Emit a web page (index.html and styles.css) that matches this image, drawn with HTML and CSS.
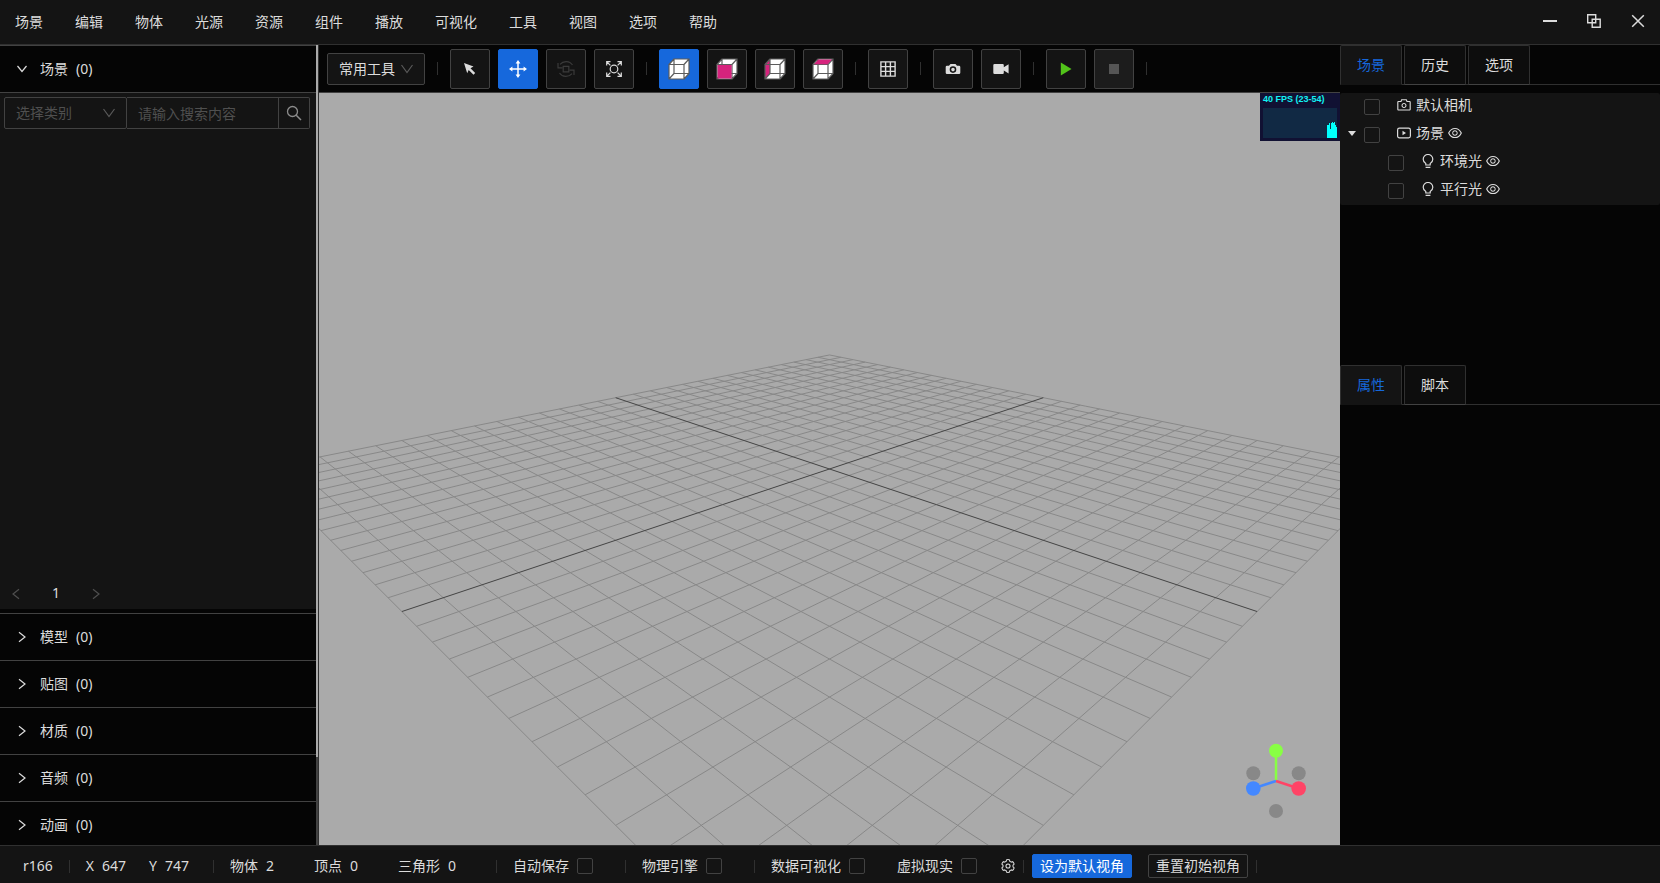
FILE: index.html
```html
<!DOCTYPE html>
<html lang="zh-CN">
<head>
<meta charset="utf-8">
<title>场景编辑器</title>
<link rel="stylesheet" href="styles.css">
</head>
<body>
<svg class="sprite" aria-hidden="true">
  <symbol id="chevron" viewBox="0 0 14 14"><path d="M1.5 3 7 10.5 12.500 3" fill="none" stroke="currentColor" stroke-width="1.2"/></symbol>
  <symbol id="arrow-down" viewBox="0 0 12 12"><path d="M1.500 3 6 8.500 10.500 3" fill="none" stroke="currentColor" stroke-width="1.2"/></symbol>
  <symbol id="arrow-right" viewBox="0 0 12 12"><path d="M3 1.200 9 6 3 10.800" fill="none" stroke="currentColor" stroke-width="1.2"/></symbol>
  <symbol id="arrow-left" viewBox="0 0 12 12"><path d="M9 1.200 3 6 9 10.800" fill="none" stroke="currentColor" stroke-width="1.2"/></symbol>
  <symbol id="eye" viewBox="64 64 896 896"><path fill="currentColor" d="M942.2 486.2C847.4 286.500 704.1 186 512 186c-192.2 0-335.4 100.5-430.2 300.3a60.3 60.3 0 000 51.5C176.600 737.5 319.9 838 512 838c192.2 0 335.4-100.5 430.2-300.3 7.700-16.200 7.700-35 0-51.500zM512 766c-161.3 0-279.4-81.8-362.7-254C232.600 339.8 350.7 258 512 258c161.3 0 279.4 81.8 362.7 254C791.500 684.2 673.4 766 512 766zm-4-430c-97.2 0-176 78.8-176 176s78.8 176 176 176 176-78.8 176-176-78.8-176-176-176zm0 288c-61.9 0-112-50.1-112-112s50.1-112 112-112 112 50.1 112 112-50.1 112-112 112z"/></symbol>
  <symbol id="camera" viewBox="64 64 896 896"><path fill="currentColor" d="M864 248H728l-32.4-90.8a32.07 32.07 0 00-30.2-21.2H358.6c-13.5 0-25.6 8.5-30.1 21.2L296 248H160c-44.2 0-80 35.8-80 80v456c0 44.2 35.8 80 80 80h704c44.2 0 80-35.8 80-80V328c0-44.2-35.8-80-80-80zm8 536c0 4.4-3.6 8-8 8H160c-4.4 0-8-3.6-8-8V328c0-4.4 3.6-8 8-8h186.7l17.1-47.8 22.9-64.2h250.5l22.9 64.2 17.1 47.8H864c4.4 0 8 3.6 8 8v456zM512 384c-88.4 0-160 71.6-160 160s71.6 160 160 160 160-71.6 160-160-71.6-160-160-160zm0 256c-53 0-96-43-96-96s43-96 96-96 96 43 96 96-43 96-96 96z"/></symbol>
  <symbol id="scene" viewBox="0 0 14 14"><rect x=".6" y="2.1" width="12.800" height="9.800" rx="1.800" fill="none" stroke="currentColor" stroke-width="1.2"/><path d="M5.500 4.700v4.600L9 7z" fill="currentColor"/></symbol>
  <symbol id="bulb" viewBox="0 0 14 14"><path d="M4.800 11V9.500C3.100 8.600 2.200 7.200 2.200 5.300a4.800 4.800 0 0 1 9.600 0c0 1.900-.9 3.300-2.600 4.200V11zM4.600 13.300h4.800" fill="none" stroke="currentColor" stroke-width="1.2"/></symbol>
  <symbol id="cube-lines" viewBox="0 0 22 22"><path d="M1 6.500h15V21H1zM6 1h15v14.500H6zM1 6.500 6 1M16 6.500 21 1M16 21l5-5.500M1 21l5-5.500" fill="none" stroke="#5c5c5c" stroke-width="1.200"/></symbol>
</svg>

<header class="menubar">
  <nav class="menu">
    <button>场景</button><button>编辑</button><button>物体</button><button>光源</button><button>资源</button><button>组件</button><button>播放</button><button>可视化</button><button>工具</button><button>视图</button><button>选项</button><button>帮助</button>
  </nav>
  <div class="window-controls">
    <button aria-label="最小化"><svg class="icon" viewBox="0 0 14 14"><path d="M0 7h14" stroke="currentColor" stroke-width="2"/></svg></button>
    <button aria-label="还原"><svg class="icon" viewBox="0 0 14 14"><path d="M.7.7h8v8h-8zM5.200 5.200h8v8h-8z" fill="none" stroke="currentColor" stroke-width="1.400"/></svg></button>
    <button aria-label="关闭"><svg class="icon" viewBox="0 0 14 14"><path d="M1.200 1.200l11.600 11.600M12.800 1.200 1.200 12.800" stroke="currentColor" stroke-width="1.500"/></svg></button>
  </div>
</header>

<main class="workspace">
  <aside class="assets">
    <div class="accordion">
      <section class="group group-open">
        <button class="group-head" aria-expanded="true"><svg class="arrow"><use href="#arrow-down"/></svg><span>场景</span><span>(0)</span></button>
        <div class="group-body">
          <form class="filter">
            <div class="select filter-kind">
              <select aria-label="选择类别"><option>选择类别</option></select>
              <svg class="caret"><use href="#chevron"/></svg>
            </div>
            <input class="filter-text" type="text" placeholder="请输入搜索内容" aria-label="搜索内容">
            <button class="filter-go" type="button" aria-label="搜索"><svg class="search" viewBox="0 0 16 16"><circle cx="6.500" cy="6.500" r="5" fill="none" stroke="currentColor" stroke-width="1.300"/><path d="M10.200 10.200 15 15" stroke="currentColor" stroke-width="1.500"/></svg></button>
          </form>
          <nav class="pager">
            <button aria-label="上一页" disabled><svg class="arrow"><use href="#arrow-left"/></svg></button>
            <button>1</button>
            <button aria-label="下一页" disabled><svg class="arrow"><use href="#arrow-right"/></svg></button>
          </nav>
        </div>
      </section>
      <button class="group-head"><svg class="arrow"><use href="#arrow-right"/></svg><span>模型</span><span>(0)</span></button>
      <button class="group-head"><svg class="arrow"><use href="#arrow-right"/></svg><span>贴图</span><span>(0)</span></button>
      <button class="group-head"><svg class="arrow"><use href="#arrow-right"/></svg><span>材质</span><span>(0)</span></button>
      <button class="group-head"><svg class="arrow"><use href="#arrow-right"/></svg><span>音频</span><span>(0)</span></button>
      <button class="group-head"><svg class="arrow"><use href="#arrow-right"/></svg><span>动画</span><span>(0)</span></button>
    </div>
    <div class="scroll-track"><div class="scroll-thumb"></div></div>
  </aside>

  <section class="stage">
    <div class="toolbar">
      <div class="select tool-kind">
        <select aria-label="工具集"><option>常用工具</option></select>
        <svg class="caret"><use href="#chevron"/></svg>
      </div>
      <i class="rule"></i>
      <button class="tool" aria-label="选择"><svg class="glyph" viewBox="0 0 20 20"><path d="M4 4l9.500 3.600-3 1.700 4.700 4.700-1.700 1.800-4.800-4.800-1.500 3.200z" fill="currentColor"/></svg></button>
      <button class="tool active" aria-label="移动"><svg class="glyph" viewBox="0 0 20 20"><path d="M10 3v14M3 10h14" stroke="currentColor" stroke-width="1.500"/><path d="M10 1l2.400 3.400H7.600zM10 19l2.400-3.400H7.600zM1 10l3.400-2.400v4.800zM19 10l-3.400-2.400v4.800z" fill="currentColor"/></svg></button>
      <button class="tool" aria-label="旋转" disabled><svg class="glyph" viewBox="0 0 20 20"><path d="M7.200 7.400h5.600v5.400H7.200zM4 5.400C7.300 1.500 13.500 1.500 16.500 6M3.500 14c3 4.500 9.200 4.500 12.500.6" fill="none" stroke="currentColor" stroke-width="1.200"/><path d="M2 4v4.800h4.600M18 16v-4.800h-4.600" fill="none" stroke="currentColor" stroke-width="1.200"/></svg></button>
      <button class="tool" aria-label="缩放"><svg class="glyph" viewBox="0 0 20 20"><circle cx="10" cy="10" r="3.800" fill="none" stroke="currentColor" stroke-width="1.200"/><path d="M2.700 6.500V2.700h3.800M13.500 2.700h3.800v3.800M17.300 13.500v3.800h-3.800M6.500 17.300H2.700v-3.800M3 3l3.400 3.400M17 3l-3.400 3.400M17 17l-3.400-3.400M3 17l3.400-3.400" fill="none" stroke="currentColor" stroke-width="1.200"/></svg></button>
      <i class="rule"></i>
      <button class="tool active" aria-label="透视图"><svg class="cube" viewBox="0 0 22 22"><path d="M1 6.500 6 1h15v14.500L16 21H1z" fill="#fff"/><use href="#cube-lines" width="22" height="22"/></svg></button>
      <button class="tool" aria-label="正视图"><svg class="cube" viewBox="0 0 22 22"><path d="M1 6.500 6 1h15v14.500L16 21H1z" fill="#fff"/><use href="#cube-lines" width="22" height="22"/><path d="M1.600 7h14v13.500h-14z" fill="#d6237d"/></svg></button>
      <button class="tool" aria-label="侧视图"><svg class="cube" viewBox="0 0 22 22"><path d="M1 6.500 6 1h15v14.500L16 21H1z" fill="#fff"/><path d="M1 6.500 6 1v14.500L1 21z" fill="#d6237d"/><use href="#cube-lines" width="22" height="22"/></svg></button>
      <button class="tool" aria-label="顶视图"><svg class="cube" viewBox="0 0 22 22"><path d="M1 6.500 6 1h15v14.500L16 21H1z" fill="#fff"/><use href="#cube-lines" width="22" height="22"/><path d="M2 6.200 6.300 1.500h13.700L15.700 6.200z" fill="#d6237d"/></svg></button>
      <i class="rule"></i>
      <button class="tool" aria-label="网格"><svg class="glyph" viewBox="0 0 20 20"><path d="M2.900 2.900h14.200v14.200H2.900zM7.600 3v14M12.400 3v14M3 7.600h14M3 12.400h14" fill="none" stroke="currentColor" stroke-width="1.400"/></svg></button>
      <i class="rule"></i>
      <button class="tool" aria-label="截图"><svg class="glyph" viewBox="0 0 20 20"><path fill="currentColor" fill-rule="evenodd" d="M7.500 5h5L14 6.800h2a1.300 1.300 0 0 1 1.300 1.300v5.600A1.300 1.300 0 0 1 16 15H4a1.300 1.300 0 0 1-1.300-1.300V8.100A1.300 1.300 0 0 1 4 6.800h2zM10 7.300a3.300 3.300 0 1 0 0 6.600 3.300 3.300 0 0 0 0-6.600zm0 1.500a1.800 1.800 0 1 1 0 3.600 1.800 1.800 0 0 1 0-3.600z"/></svg></button>
      <button class="tool" aria-label="录制"><svg class="glyph" viewBox="0 0 20 20"><path fill="currentColor" d="M3.500 5h8A1.200 1.200 0 0 1 12.800 6.200v2L17.600 5.200v9.200l-4.800-2.800v2.200a1.200 1.200 0 0 1-1.300 1.200h-8a1.200 1.200 0 0 1-1.200-1.200V6.200A1.200 1.200 0 0 1 3.500 5z"/></svg></button>
      <i class="rule"></i>
      <button class="tool play" aria-label="播放"><svg class="glyph" viewBox="0 0 20 20"><path d="M4.800 3.500v13L15.500 10z" fill="currentColor"/></svg></button>
      <button class="tool stop" aria-label="停止" disabled><svg class="glyph" viewBox="0 0 20 20"><path d="M5 5h10v10H5z" fill="currentColor"/></svg></button>
      <i class="rule"></i>
    </div>
    <div class="viewport">
      <canvas class="grid" id="grid"></canvas>
      <div class="stats">
        <span>40 FPS (23-54)</span>
        <svg class="stats-graph" viewBox="0 0 74 30"><path d="M64 30V17h2v-2h1v6h1v-6h1v-1h1v1h1v-1h1v3h1v2h1v11z" fill="#0ff"/></svg>
      </div>
      <svg class="gizmo" viewBox="-64 -64 128 128">
        <g fill="#888"><circle cx="-22.700" cy="-7.700" r="7"/><circle cx="22.700" cy="-7.700" r="7"/><circle cx="0" cy="30" r="7"/></g>
        <path d="M0 0v-30" stroke="#8f4" stroke-width="2.500"/><path d="M0 0l-22.700 7.500" stroke="#48f" stroke-width="2.500"/><path d="M0 0l22.700 7.500" stroke="#f46" stroke-width="2.500"/>
        <circle cx="0" cy="-30.300" r="7" fill="#8f4"/><circle cx="-22.700" cy="7.500" r="7.300" fill="#48f"/><circle cx="22.700" cy="7.500" r="7.300" fill="#f46"/>
      </svg>
    </div>
  </section>

  <aside class="inspector">
    <section class="pane pane-scene">
      <div class="tabs" role="tablist">
        <button class="tab current" role="tab" aria-selected="true">场景</button><button class="tab" role="tab">历史</button><button class="tab" role="tab">选项</button>
      </div>
      <ul class="tree">
        <li class="node"><span class="twist"></span><input type="checkbox" id="n1"><label for="n1"><svg class="icon"><use href="#camera"/></svg>默认相机</label></li>
        <li class="node"><span class="twist"><svg class="triangle" viewBox="0 0 8 5"><path d="M0 0h8L4 5z" fill="currentColor"/></svg></span><input type="checkbox" id="n2"><label for="n2"><svg class="icon"><use href="#scene"/></svg>场景</label><svg class="icon"><use href="#eye"/></svg></li>
        <li class="node child"><span class="twist"></span><input type="checkbox" id="n3"><label for="n3"><svg class="icon"><use href="#bulb"/></svg>环境光</label><svg class="icon"><use href="#eye"/></svg></li>
        <li class="node child"><span class="twist"></span><input type="checkbox" id="n4"><label for="n4"><svg class="icon"><use href="#bulb"/></svg>平行光</label><svg class="icon"><use href="#eye"/></svg></li>
      </ul>
    </section>
    <section class="pane pane-props">
      <div class="tabs" role="tablist">
        <button class="tab current" role="tab" aria-selected="true">属性</button><button class="tab" role="tab">脚本</button>
      </div>
    </section>
  </aside>
</main>

<footer class="status">
  <span class="version">r166</span>
  <i class="rule"></i>
  <div class="cells coords"><span class="pair"><span>X</span><span>647</span></span><span class="pair"><span>Y</span><span>747</span></span></div>
  <i class="rule"></i>
  <div class="cells counts"><span class="pair"><span>物体</span><span>2</span></span><span class="pair"><span>顶点</span><span>0</span></span><span class="pair"><span>三角形</span><span>0</span></span></div>
  <i class="rule"></i>
  <div class="cells"><label class="pair">自动保存<input type="checkbox"></label></div>
  <i class="rule"></i>
  <div class="cells"><label class="pair">物理引擎<input type="checkbox"></label></div>
  <i class="rule"></i>
  <div class="cells flags"><label class="pair">数据可视化<input type="checkbox"></label><label class="pair">虚拟现实<input type="checkbox"></label></div>
  <div class="actions">
    <button class="gear" aria-label="设置"><svg class="icon" viewBox="24 24 976 976"><g fill="none" stroke="currentColor" stroke-width="74"><circle cx="512" cy="512" r="142"/><path d="M924.8 625.7l-65.5-56c3.1-19 4.7-38.4 4.7-57.8s-1.6-38.8-4.7-57.8l65.5-56a32 32 0 009.3-35.2l-.9-2.6a443.7 443.7 0 00-79.7-137.9l-1.8-2.1a32.1 32.1 0 00-35.1-9.5l-81.3 28.9c-30-24.6-63.5-44-99.7-57.6l-15.7-85a32 32 0 00-25.8-25.7l-2.7-.5c-52.1-9.4-106.9-9.4-159 0l-2.7.5a32 32 0 00-25.8 25.7l-15.8 85.4a351.900 351.900 0 00-99 57.4l-81.9-29.1a32 32 0 00-35.1 9.5l-1.8 2.1a446 446 0 00-79.7 137.9l-.9 2.6c-4.5 12.5-.8 26.5 9.3 35.2l66.3 56.6c-3.1 18.8-4.6 38-4.6 57.1 0 19.2 1.5 38.4 4.6 57.1L99 625.500a32 32 0 00-9.3 35.2l.9 2.6c18.1 50.4 44.9 96.9 79.7 137.9l1.8 2.1a32.1 32.1 0 0035.1 9.5l81.9-29.1c29.8 24.5 63.1 43.9 99 57.4l15.8 85.4a32 32 0 0025.8 25.7l2.7.5a449.400 449.400 0 00159 0l2.7-.5a32 32 0 0025.8-25.7l15.7-85a350 350 0 0099.7-57.6l81.3 28.9a32 32 0 0035.1-9.5l1.8-2.1c34.8-41.1 61.6-87.5 79.7-137.9l.9-2.6c4.500-12.300.8-26.300-9.300-35z"/></g></svg></button>
    <i class="rule"></i>
    <button class="btn primary">设为默认视角</button>
    <button class="btn">重置初始视角</button>
    <i class="rule"></i>
  </div>
</footer>
<script src="grid.js"></script>
</body>
</html>
```
FILE: styles.css
```css
:root {
  --panel: #141414;
  --base: #050505;
  --line: #424242;
  --line-soft: #303030;
  --text: #dcdcdc;
  --muted: #4f4f4f;
  --accent: #1668dc;
}

* {
  box-sizing: border-box;
}

body {
  margin: 0;
  height: 100vh;
  display: flex;
  flex-direction: column;
  overflow: hidden;
  background: var(--base);
  color: var(--text);
  font: 14px/22px "Noto Sans", "Noto Sans CJK SC", sans-serif;
}

button,
input,
select {
  margin: 0;
  font: inherit;
  color: inherit;
}

button {
  padding: 0;
  border: 0;
  background: none;
  display: flex;
  align-items: center;
  justify-content: center;
  white-space: nowrap;
}

svg {
  display: block;
  flex: none;
}

.sprite {
  display: none;
}

.icon {
  width: 14px;
  height: 14px;
}

.rule {
  flex: none;
  width: 1px;
  height: 13px;
  background: var(--line-soft);
}

input[type="checkbox"] {
  appearance: none;
  flex: none;
  width: 16px;
  height: 16px;
  border: 1px solid var(--line);
  border-radius: 2px;
}

/* Menu bar */
.menubar {
  flex: none;
  display: flex;
  justify-content: space-between;
  height: 45px;
  background: var(--panel);
  border-bottom: 1px solid var(--line-soft);
}

.menu,
.window-controls {
  display: flex;
}

.menu button {
  padding: 0 16px;
}

.menu button:first-child {
  padding-left: 15px;
}

.window-controls button {
  width: 44px;
  height: 42px;
}

/* Workspace */
.workspace {
  flex: 1;
  min-height: 0;
  display: flex;
}

/* Asset list */
.assets {
  flex: none;
  width: 319px;
  display: flex;
  overflow: hidden;
  border-right: 1px solid var(--line-soft);
}

.accordion {
  flex: 1;
  display: flex;
  flex-direction: column;
}

.group {
  flex: 1 0 auto;
  display: flex;
  flex-direction: column;
  padding-bottom: 4px;
}

.group-head {
  flex: none;
  width: 100%;
  height: 47px;
  padding-left: 16px;
  gap: 8px;
  justify-content: flex-start;
  border-top: 1px solid var(--line);
}

.arrow {
  width: 12px;
  height: 12px;
}

.group-head .arrow {
  margin-right: 4px;
}

.group-body {
  flex: 1;
  min-height: 517px;
  display: flex;
  flex-direction: column;
  justify-content: space-between;
  padding: 4px;
  background: var(--panel);
  border-top: 1px solid var(--line);
}

.filter {
  display: flex;
  width: 306px;
}

.select {
  position: relative;
  display: flex;
  height: 32px;
}

.select select {
  appearance: none;
  width: 100%;
  padding: 0 11px;
  border: 1px solid var(--line);
  border-radius: 2px;
  background: var(--panel);
}

.select .caret {
  position: absolute;
  right: 11px;
  top: 9px;
  width: 14px;
  height: 14px;
  color: #5a5a5a;
  pointer-events: none;
}

.filter-kind {
  width: 123px;
}

.filter-kind select {
  color: var(--muted);
}

.filter-text {
  flex: 1;
  min-width: 0;
  height: 32px;
  padding: 0 11px;
  border: 1px solid var(--line);
  border-left: 0;
  background: var(--panel);
}

.filter-text::placeholder {
  color: var(--muted);
}

.filter-go {
  width: 31px;
  height: 32px;
  border: 1px solid var(--line);
  border-left: 0;
  border-radius: 0 2px 2px 0;
  color: #8c8c8c;
}

.search {
  width: 16px;
  height: 16px;
}

.pager {
  display: flex;
  gap: 8px;
  margin-left: -4px;
}

.pager button {
  width: 32px;
  height: 24px;
}

.pager button:disabled {
  padding-top: 2px;
  color: var(--muted);
}

.scroll-track {
  flex: none;
  width: 2px;
  background: var(--line);
}

.scroll-thumb {
  height: 89%;
  background: #aaa;
}

/* Stage */
.stage {
  flex: 1;
  min-width: 0;
  display: flex;
  flex-direction: column;
}

.toolbar {
  flex: none;
  display: flex;
  align-items: center;
  gap: 8px;
  height: 48px;
  padding-left: 8px;
  border-bottom: 1px solid var(--line);
}

.toolbar .rule {
  margin: 0 4px;
}

.tool-kind {
  width: 98px;
}

.tool {
  flex: none;
  width: 40px;
  height: 40px;
  border: 1px solid var(--line);
  border-radius: 2px;
  background: var(--panel);
}

.tool.active {
  border-color: var(--accent);
  background: var(--accent);
  color: #fff;
}

.tool:disabled {
  color: #3a3a3a;
}

.tool.play {
  color: #52c41a;
}

.tool.stop {
  background: #1c1c1c;
  color: #555;
}

.glyph {
  width: 20px;
  height: 20px;
}

.cube {
  width: 22px;
  height: 22px;
}

.viewport {
  position: relative;
  flex: 1;
  min-height: 0;
  overflow: hidden;
  background: #aaa;
}

.grid {
  display: block;
  width: 100%;
  height: 100%;
}

.stats {
  position: absolute;
  top: 0;
  right: 0;
  width: 80px;
  height: 48px;
  padding: 0 3px 3px;
  display: flex;
  flex-direction: column;
  justify-content: space-between;
  background: #111133;
  color: #11f2f4;
  font: bold 9px/13px "Liberation Sans", Arial, sans-serif;
  white-space: nowrap;
}

.stats-graph {
  width: 74px;
  height: 30px;
  background: #112944;
}

.gizmo {
  position: absolute;
  right: 0;
  bottom: 0;
  width: 128px;
  height: 128px;
}

/* Inspector */
.inspector {
  flex: none;
  width: 320px;
  display: flex;
  flex-direction: column;
}

.pane-scene {
  flex: 2 1 0;
}

.pane-props {
  flex: 3 1 0;
}

.tabs {
  display: flex;
  gap: 2px;
  height: 40px;
  border-bottom: 1px solid var(--line-soft);
}

.tab {
  height: 40px;
  padding: 0 16px;
  border: 1px solid var(--line-soft);
  border-bottom-color: var(--line);
  border-radius: 2px 2px 0 0;
  background: #0d0d0d;
}

.tab.current {
  background: var(--panel);
  border-bottom-color: var(--panel);
  color: var(--accent);
}

.tree {
  margin: 8px 0 0;
  padding: 0;
  list-style: none;
  background: var(--panel);
  border-radius: 2px;
}

.node {
  display: flex;
  align-items: center;
  height: 28px;
  padding-bottom: 4px;
}

.node.child {
  padding-left: 24px;
}

.twist {
  width: 24px;
  display: flex;
  justify-content: center;
}

.triangle {
  width: 8px;
  height: 5px;
}

.node input {
  margin: 4px 17px 0 0;
}

.node label {
  display: flex;
  align-items: center;
  gap: 5px;
  margin-right: 4px;
}

/* Status bar */
.status {
  flex: none;
  display: flex;
  align-items: center;
  gap: 16px;
  height: 38px;
  padding: 3px 23px 0;
  background: var(--panel);
  border-top: 1px solid var(--line-soft);
  white-space: nowrap;
}

.cells,
.pair,
.actions {
  display: flex;
  align-items: center;
}

.pair {
  gap: 8px;
}

.coords {
  gap: 23px;
  padding-right: 8px;
}

.counts {
  gap: 40px;
  padding-right: 24px;
}

.cells:has(input) {
  padding-right: 16px;
  gap: 32px;
}

.cells.flags {
  padding-right: 8px;
}

.actions {
  gap: 8px;
}

.btn {
  height: 24px;
  padding: 0 7px;
  border: 1px solid var(--line);
  border-radius: 2px;
  background: var(--panel);
}

.btn.primary {
  margin-right: 8px;
  border-color: var(--accent);
  background: var(--accent);
  color: #fff;
}
```
FILE: grid.js
```js
// Ground grid: 30 x 30 units, seen by a 50 degree camera at (20, 10, 20) that looks at the origin.
const canvas = document.getElementById("grid");
const HALF = 15;
const DISTANCE = 30;
const SIN = 1 / 3;
const COS = Math.sqrt(8) / 3;

function draw() {
  const w = canvas.clientWidth;
  const h = canvas.clientHeight;
  canvas.width = w;
  canvas.height = h;
  const ctx = canvas.getContext("2d");
  const focal = h / 2 / Math.tan((25 * Math.PI) / 180);

  function project(x, z) {
    const toward = (x + z) / Math.SQRT2;
    const side = (x - z) / Math.SQRT2;
    const depth = DISTANCE - toward * COS;
    return [w / 2 + (focal * side) / depth, h / 2 + (focal * toward * SIN) / depth];
  }

  function line(x1, z1, x2, z2) {
    ctx.beginPath();
    ctx.moveTo(...project(x1, z1));
    ctx.lineTo(...project(x2, z2));
    ctx.stroke();
  }

  function pair(i) {
    line(i, -HALF, i, HALF);
    line(-HALF, i, HALF, i);
  }

  ctx.lineWidth = 1;
  ctx.strokeStyle = "#888";
  for (let i = -HALF; i <= HALF; i++) {
    if (i !== 0) pair(i);
  }
  ctx.strokeStyle = "#444";
  pair(0);
}

draw();
window.addEventListener("resize", draw);
```
